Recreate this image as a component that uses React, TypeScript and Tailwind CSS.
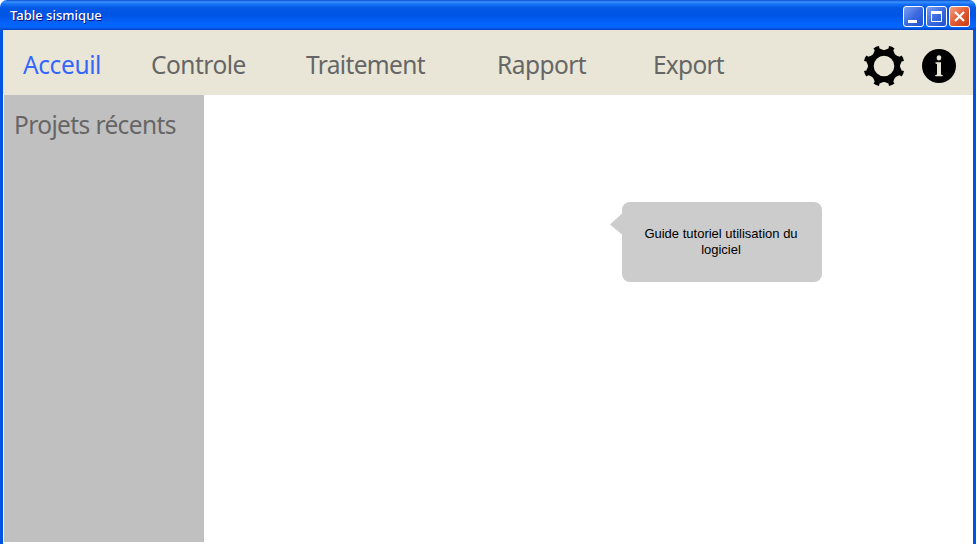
import type { ReactNode } from 'react';

const tabs = [
  { label: 'Acceuil', style: 'w-[128px] text-[#3366ff] tracking-[-0.4px]' },
  { label: 'Controle', style: 'w-[155px] text-[#666666] tracking-[-0.5px]' },
  { label: 'Traitement', style: 'w-[191px] text-[#666666] tracking-[-0.65px]' },
  { label: 'Rapport', style: 'w-[156px] text-[#666666] tracking-[-0.55px]' },
  { label: 'Export', style: 'w-[211px] text-[#666666] tracking-[-0.75px]' },
];

const toothAngles = [22.5, 67.5, 112.5, 157.5, 202.5, 247.5, 292.5, 337.5];

function CaptionButton({ close, children }: { close?: boolean; children: ReactNode }) {
  return (
    <button
      className={`h-[21px] w-[21px] rounded-[3px] border border-white ${
        close
          ? 'bg-linear-to-br from-[#f0a080] via-[#e25a32] to-[#c83c10]'
          : 'bg-linear-to-br from-[#7d9ff0] via-[#3c6be0] to-[#1c50d0]'
      }`}
    >
      <svg width="19" height="19" viewBox="0 0 19 19" fill="none" stroke="white">
        {children}
      </svg>
    </button>
  );
}

function TitleBar() {
  return (
    <header className="flex h-[30px] w-[976px] items-start justify-between rounded-t-[7px] bg-[linear-gradient(180deg,#0a4fd0_0px,#3a92ff_2px,#1672f5_4px,#0458e4_8px,#0054e3_15px,#0361f8_22px,#0468fe_27px,#0150d8_29px,#0142c0_30px)] pl-[10px] pr-[6px] pt-[6px]">
      <h1 className="font-['Noto_Sans',sans-serif] text-[13px] font-medium leading-[19px] text-white [text-shadow:1px_1px_0_#0f1089]">
        Table sismique
      </h1>
      <div className="flex gap-[2px]">
        <CaptionButton>
          <path d="M4 14.5h9" strokeWidth="3" />
        </CaptionButton>
        <CaptionButton>
          <path d="M4.500 5v9.500h10V5" />
          <path d="M4 5.500h11" strokeWidth="3" />
        </CaptionButton>
        <CaptionButton close>
          <path d="M5 5l9 9M14 5l-9 9" strokeWidth="2.200" />
        </CaptionButton>
      </div>
    </header>
  );
}

function GearIcon() {
  return (
    <svg width="40" height="40" viewBox="-20 -20 40 40">
      <circle r="13.200" fill="none" stroke="black" strokeWidth="5.800" />
      {toothAngles.map((angle) => (
        <path
          key={angle}
          d="M-6-14.500L-2.600-18L-3-20.300Q0-21.300 3-20.300L2.600-18L6-14.500L3-12.500H-3Z"
          transform={`rotate(${angle})`}
        />
      ))}
    </svg>
  );
}

function InfoIcon() {
  return (
    <svg width="34" height="34" viewBox="0 0 34 34">
      <circle cx="17" cy="17" r="17" />
      <g fill="#e9e6d7">
        <ellipse cx="17" cy="8.800" rx="2.300" ry="2.600" />
        <path d="M13.500 13.300h5.500v12.300l1.800.6v1h-7.600v-1l1.800-.6V15l-1.500-.5z" />
      </g>
    </svg>
  );
}

export default function App() {
  return (
    <div className="h-[545px] w-[977px] overflow-hidden bg-white">
      <TitleBar />
      <div className="flex h-[514px] w-[976px] flex-col border-x-[3px] border-[#0054e3]">
        <nav className="flex h-[65px] shrink-0 items-start bg-[#e9e6d7] pl-[20px] font-['Noto_Sans',sans-serif] text-[24.5px] leading-[34px]">
          {tabs.map((tab) => (
            <a key={tab.label} className={`mt-[18px] shrink-0 ${tab.style}`}>
              {tab.label}
            </a>
          ))}
          <div className="mt-[16px] flex shrink-0 items-center gap-[18px]">
            <GearIcon />
            <InfoIcon />
          </div>
        </nav>
        <div className="flex grow">
          <aside className="ml-px h-[447px] w-[200px] bg-[#c0c0c0] pl-[10px] pt-[13px] font-['Noto_Sans',sans-serif] text-[24.5px] leading-[34px] tracking-[-0.62px] text-[#666666]">
            <h2>Projets récents</h2>
          </aside>
          <main className="flex grow items-start pl-[405.5px] pt-[106.5px]">
            <svg className="mt-[10px]" width="12" height="24" viewBox="0 0 12 24" fill="#cccccc">
              <path d="M12 1.500V22.500L0 12.500Z" />
            </svg>
            <p className="h-[80px] w-[200px] rounded-[8px] bg-[#cccccc] pl-[19.500px] pr-[20.500px] pt-[24px] text-center font-['Liberation_Sans',Arial,sans-serif] text-[13px] leading-[16px] text-black">
              Guide tutoriel utilisation du logiciel
            </p>
          </main>
        </div>
      </div>
    </div>
  );
}
